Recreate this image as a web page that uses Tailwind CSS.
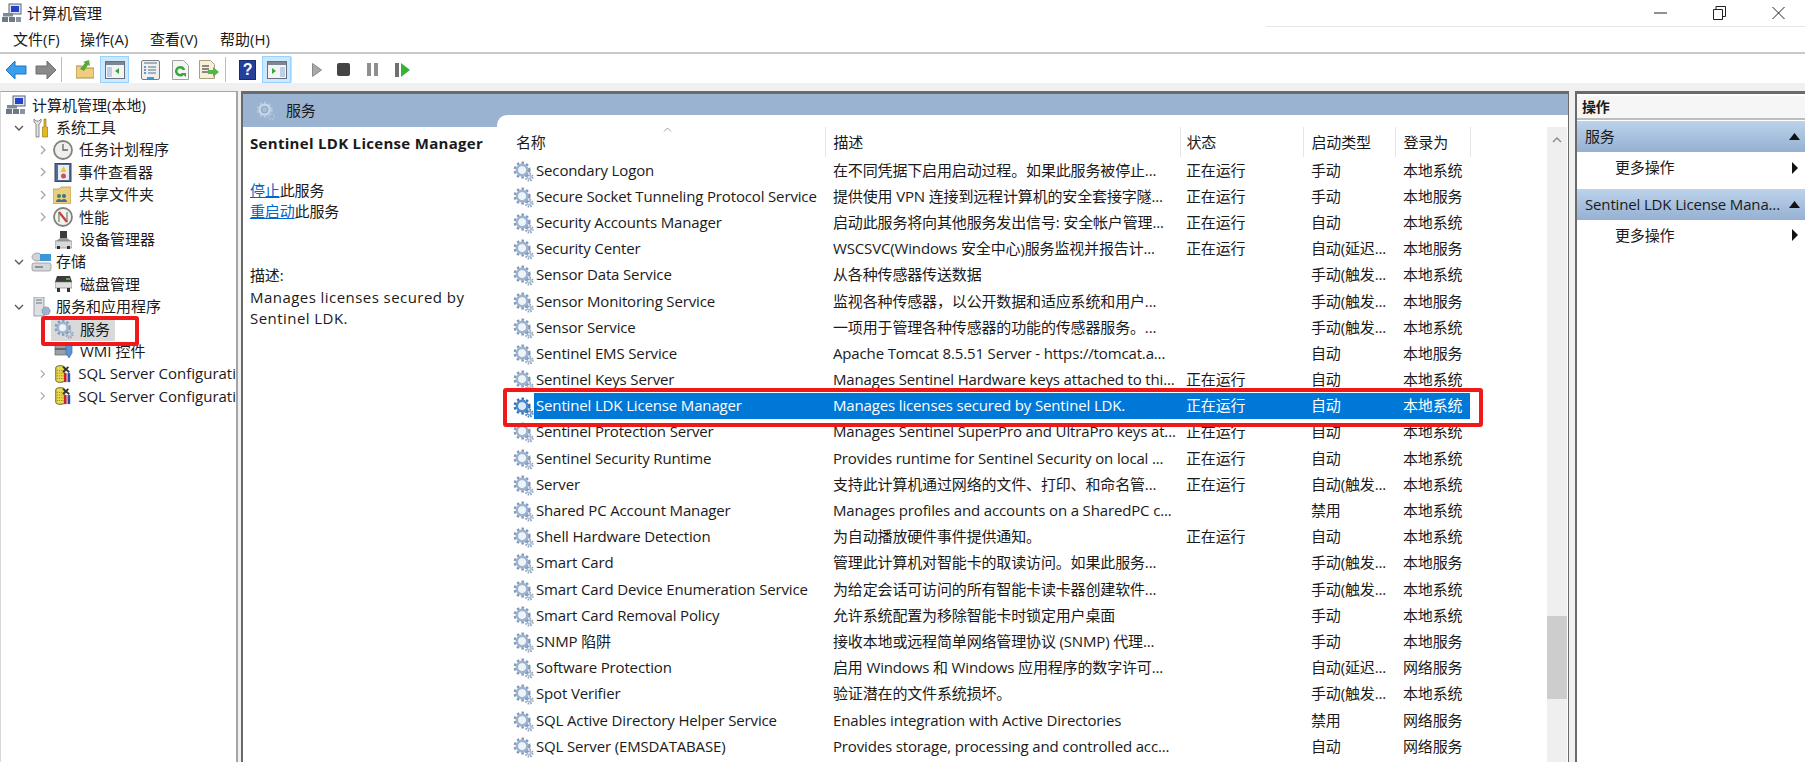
<!DOCTYPE html>
<html lang="zh">
<head>
<meta charset="UTF-8">
<title>计算机管理</title>
<script src="https://cdn.jsdelivr.net/npm/@tailwindcss/browser@4"></script>
</head>
<body class="relative w-[1805px] h-[762px] overflow-hidden bg-white text-[15px] leading-none tracking-[-.15px] text-[#1a1a1a] font-['Open_Sans','Noto_Sans_CJK_SC',sans-serif]">

<!-- shared icons -->
<svg width="0" height="0" class="absolute">
  <defs>
    <symbol id="gear" viewBox="0 0 22 22">
      <circle cx="9.5" cy="9.5" r="7.6" fill="none" stroke="#7f97b8" stroke-width="2.6" stroke-dasharray="2.6 2.4"/>
      <circle cx="9.5" cy="9.5" r="5.4" fill="none" stroke="#9db4d0" stroke-width="2.8"/>
      <circle cx="9.5" cy="9.5" r="3.6" fill="#eef3f8"/>
      <circle cx="17" cy="17" r="3.6" fill="none" stroke="#8ea3bf" stroke-width="2" stroke-dasharray="1.6 1.2"/>
      <circle cx="17" cy="17" r="2" fill="#dfe6ee" stroke="#8ea3bf"/>
    </symbol>
    <symbol id="gear-sel" viewBox="0 0 22 22">
      <circle cx="9.5" cy="9.5" r="7.6" fill="none" stroke="#2f6fb5" stroke-width="2.6" stroke-dasharray="2.6 2.4"/>
      <circle cx="9.5" cy="9.5" r="5.4" fill="none" stroke="#4a8ac9" stroke-width="2.8"/>
      <circle cx="9.5" cy="9.5" r="3.6" fill="#dbe9f6"/>
      <circle cx="17" cy="17" r="3.6" fill="none" stroke="#3d78b8" stroke-width="2" stroke-dasharray="1.6 1.2"/>
      <circle cx="17" cy="17" r="2" fill="#cfe0f0" stroke="#3d78b8"/>
    </symbol>
    <symbol id="gear-pale" viewBox="0 0 22 22">
      <circle cx="9.5" cy="9.5" r="7.6" fill="none" stroke="#b4c6dc" stroke-width="2.6" stroke-dasharray="2.6 2.4"/>
      <circle cx="9.5" cy="9.5" r="5.4" fill="none" stroke="#c9d7e7" stroke-width="2.8"/>
      <circle cx="9.5" cy="9.5" r="3.6" fill="#a8bfd9" stroke="#7f9cc0" stroke-width=".8"/>
      <circle cx="17" cy="17" r="3.2" fill="none" stroke="#b2c3d8" stroke-width="2" stroke-dasharray="1.6 1.2"/>
    </symbol>
    <symbol id="computer" viewBox="0 0 20 20">
      <rect x="7" y="1" width="12" height="10" fill="#dfe4ec" stroke="#56657c"/>
      <rect x="9" y="3" width="8" height="6" fill="#2542c8"/>
      <rect x="1" y="10" width="10" height="3.5" fill="#7d8998"/>
      <rect x="0" y="14" width="6" height="5" fill="#6d7988"/>
      <rect x="7" y="14" width="6" height="5" fill="#6d7988"/>
      <rect x="14" y="14" width="5" height="5" fill="#8a95a3"/>
    </symbol>
    <symbol id="sql" viewBox="0 0 20 20">
      <path d="M2 3c0-3 10-3 10 0v14c0 3-10 3-10 0z" fill="#ecd94c" stroke="#51512a"/>
      <path d="M3.500 6h7M3.500 9h7M3.500 12h7M3.500 15h7" stroke="#7a7a30" stroke-dasharray="1 1"/>
      <path d="M10 2l7 6M16 2l-6 6" stroke="#333" stroke-width="2"/>
      <rect x="11" y="9" width="3" height="10" fill="#c9202c"/>
      <rect x="15" y="9" width="3" height="10" fill="#1f4fb8"/>
    </symbol>
    <symbol id="chev-r" viewBox="0 0 8 10"><path d="M2 1l4 4-4 4" fill="none" stroke="#a6a6a6" stroke-width="1.300"/></symbol>
    <symbol id="chev-d" viewBox="0 0 10 8"><path d="M1 2l4 4 4-4" fill="none" stroke="#555" stroke-width="1.300"/></symbol>
    <symbol id="pane" viewBox="0 0 20 18">
      <rect x=".5" y=".5" width="19" height="17" fill="#f4f4f4" stroke="#66707c"/>
      <rect x="1" y="1" width="18" height="3" fill="#7d8793"/>
    </symbol>
  </defs>
</svg>

<!-- title bar -->
<div class="flex items-center h-[26px]">
  <svg class="w-[20px] h-[20px] ml-[2px]"><use href="#computer"/></svg>
  <span class="ml-[5px] tracking-normal">计算机管理</span>
  <div class="ml-auto flex items-center">
    <svg class="w-[14px] h-[14px] mr-[45px]" viewBox="0 0 14 14"><path d="M0 7h13" stroke="#222" stroke-width="1"/></svg>
    <svg class="w-[13px] h-[14px] mr-[46px]" viewBox="0 0 13 14"><path d="M.5 3.500h9v10h-9zM3 3.500v-3h9.500v10h-3" fill="none" stroke="#222"/></svg>
    <svg class="w-[13px] h-[14px] mr-[20px]" viewBox="0 0 13 14"><path d="M.5 1l12 12M12.500 1l-12 12" stroke="#222"/></svg>
  </div>
</div>

<!-- menu bar -->
<div class="flex h-[28px] border-b-2 border-[#c9c9c9] tracking-normal">
  <div class="flex items-center pl-[13px]">
    <span class="w-[67px]">文件(F)</span><span class="w-[70px]">操作(A)</span><span class="w-[70px]">查看(V)</span><span>帮助(H)</span>
  </div>
  <div class="ml-auto w-[539px] border-t border-[#e6e6e6]"></div>
</div>

<!-- toolbar -->
<div class="flex items-center h-[29px] pt-[2px] pl-[6px]">
  <svg class="w-[21px] h-[18px]" viewBox="0 0 21 18"><path d="M0 9L9 0v5h11v8H9v5z" fill="#3aa0ee" stroke="#1f76c4"/></svg>
  <svg class="w-[21px] h-[18px] ml-[8px]" viewBox="0 0 21 18"><path d="M21 9l-9-9v5H1v8h11v5z" fill="#8a8a8a" stroke="#6e6e6e"/></svg>
  <div class="w-px h-[25px] bg-[#bdbdbd] ml-[5px]"></div>
  <svg class="w-[18px] h-[19px] ml-[14px]" viewBox="0 0 18 19"><path d="M0 6h6l2 2h10v10H0z" fill="#efcd7c" stroke="#a98f4f"/><path d="M4 9l5-6-2-1 6-2 1 6-2-1-4 6z" fill="#5aa83a"/></svg>
  <div class="flex items-center justify-center w-[29px] h-[27px] ml-[6px] bg-[#cce8ff] border border-[#99d1ff]">
    <svg class="w-[20px] h-[18px]"><use href="#pane"/><path d="M2 6h5v10H2z" fill="#bcd0e8"/><path d="M14 7v6l-4-3z" fill="#3aa53a"/></svg>
  </div>
  <svg class="w-[19px] h-[20px] ml-[12px]" viewBox="0 0 19 20"><rect x=".5" y=".5" width="18" height="19" rx="1.500" fill="#efefef" stroke="#7c7c7c"/><path d="M3 3h13M7 7h8M7 10h8M7 13h8" stroke="#8c9bb0" stroke-width="1.500"/><path d="M3 7h2M3 10h2M3 13h2" stroke="#3d75c0" stroke-width="1.500"/><path d="M6 18h7" stroke="#38a0dc" stroke-width="2"/></svg>
  <svg class="w-[17px] h-[20px] ml-[12px]" viewBox="0 0 17 20"><path d="M.5.500h11l5 5v14H.5z" fill="#f5f5f5" stroke="#a0a0a0"/><path d="M12 10a4 4 0 1 0-1 4" fill="none" stroke="#3aa53a" stroke-width="2.500"/><path d="M9 13h5v4z" fill="#3aa53a"/></svg>
  <svg class="w-[20px] h-[20px] ml-[10px]" viewBox="0 0 20 20"><path d="M.5.500h11l4 4v14H.5z" fill="#f6f0d8" stroke="#a79f80"/><path d="M3 6h7M3 9h7M3 12h7" stroke="#666" stroke-width="1.500"/><path d="M9 10h5V7l6 5-6 5v-3H9z" fill="#52b64c"/></svg>
  <div class="w-px h-[25px] bg-[#bdbdbd] ml-[6px]"></div>
  <div class="flex items-center justify-center w-[17px] h-[20px] ml-[13px] bg-[#24409c] border border-[#1a2a6a] text-white font-bold text-[16px] font-['Liberation_Sans',sans-serif]">?</div>
  <div class="flex items-center justify-center w-[29px] h-[27px] ml-[6px] bg-[#cce8ff] border border-[#99d1ff]">
    <svg class="w-[20px] h-[18px]"><use href="#pane"/><path d="M13 6h5v10h-5z" fill="#bcd0e8"/><path d="M5 7v6l4-3z" fill="#3aa53a"/></svg>
  </div>
  <div class="w-px h-[25px] bg-[#dcdcdc]"></div>
  <svg class="w-[10px] h-[14px] ml-[20px]" viewBox="0 0 10 14"><path d="M.5.500l9 6.500-9 6.500z" fill="#a9a9a9" stroke="#8a8a8a"/></svg>
  <div class="w-[13px] h-[13px] ml-[15px] rounded-[2px] bg-[#444]"></div>
  <svg class="w-[11px] h-[13px] ml-[17px]" viewBox="0 0 11 13"><path d="M0 0h4v13H0zM7 0h4v13H7z" fill="#8f8f8f"/></svg>
  <svg class="w-[15px] h-[14px] ml-[17px]" viewBox="0 0 15 14"><path d="M0 0h4v14H0z" fill="#707070"/><path d="M6 0l9 7-9 7z" fill="#38b03a"/></svg>
</div>

<!-- main area -->
<div class="flex h-[679px] bg-[#f0f0f0] pt-[8px]">

  <!-- tree -->
  <div class="w-[238px] pl-[6px] pt-[2px] bg-white border-t border-l border-r-2 border-[#a5a5a5] border-l-[#d8d8d8] overflow-hidden whitespace-nowrap tracking-normal [&>div]:h-[22.4px] [&>div]:flex [&>div]:items-center">
    <div><svg class="w-[20px] h-[20px] -ml-px"><use href="#computer"/></svg><span class="ml-[6px]">计算机管理(本地)</span></div>
    <div class="ml-[7px]">
      <svg class="w-[10px] h-[8px]"><use href="#chev-d"/></svg>
      <svg class="w-[16px] h-[20px] ml-[9px]" viewBox="0 0 16 20"><path d="M1 1v3l2 2v13h3V6l2-2V1L6 3H3z" fill="#e2e2e2" stroke="#666" stroke-width=".7"/><path d="M11 1h2v8h1.500v10h-5V9H11z" fill="#e8b820" stroke="#8a6a10" stroke-width=".6"/></svg>
      <span class="ml-[7px]">系统工具</span>
    </div>
    <div class="ml-[32px]">
      <svg class="w-[8px] h-[10px]"><use href="#chev-r"/></svg>
      <svg class="w-[20px] h-[20px] ml-[6px]" viewBox="0 0 20 20"><circle cx="10" cy="10" r="9" fill="#efefef" stroke="#85827a" stroke-width="1.800"/><path d="M10 4v6h5" fill="none" stroke="#666" stroke-width="1.300"/></svg>
      <span class="ml-[6px]">任务计划程序</span>
    </div>
    <div class="ml-[32px]">
      <svg class="w-[8px] h-[10px]"><use href="#chev-r"/></svg>
      <svg class="w-[18px] h-[19px] ml-[7px]" viewBox="0 0 18 19"><rect x="1" y=".5" width="16" height="18" fill="#516c96" stroke="#35486a"/><rect x="4" y="2" width="11" height="15" fill="#e8edf4"/><path d="M9.500 3l3 6h-6z" fill="#efc52c"/><circle cx="9.500" cy="13" r="2.500" fill="#d05050"/></svg>
      <span class="ml-[6px]">事件查看器</span>
    </div>
    <div class="ml-[32px]">
      <svg class="w-[8px] h-[10px]"><use href="#chev-r"/></svg>
      <svg class="w-[18px] h-[18px] ml-[6px]" viewBox="0 0 18 18"><path d="M0 3h6l2-2h10v17H0z" fill="#eccf7e" stroke="#a98f4f" stroke-width=".7"/><circle cx="6" cy="10" r="2" fill="#3c8a5c"/><circle cx="11" cy="10" r="2" fill="#3a6aa8"/><path d="M3 16c0-4 6-4 6 0zM8 16c0-4 6-4 6 0z" fill="#476e8e"/></svg>
      <span class="ml-[8px]">共享文件夹</span>
    </div>
    <div class="ml-[32px]">
      <svg class="w-[8px] h-[10px]"><use href="#chev-r"/></svg>
      <svg class="w-[20px] h-[20px] ml-[6px]" viewBox="0 0 20 20"><circle cx="10" cy="10" r="9" fill="#f2f2f2" stroke="#85827a" stroke-width="1.800"/><path d="M6 5l8 10" stroke="#d33" stroke-width="2.200"/><path d="M6 5v10M14 5v10" stroke="#5e8a5e" stroke-width="1.200"/></svg>
      <span class="ml-[6px]">性能</span>
    </div>
    <div class="ml-[48px]">
      <svg class="w-[17px] h-[18px]" viewBox="0 0 17 18"><rect x="5" y="0" width="7" height="7" fill="#3d3d3d"/><path d="M5 7L1 10h15l-4-3z" fill="#9a9a9a"/><rect x="0" y="10" width="17" height="7" fill="#d8d8d8" stroke="#7a7a7a" stroke-width=".6"/><rect x="2" y="15" width="3" height="3" fill="#333"/><rect x="12" y="15" width="3" height="3" fill="#333"/></svg>
      <span class="ml-[8px]">设备管理器</span>
    </div>
    <div class="ml-[7px]">
      <svg class="w-[10px] h-[8px]"><use href="#chev-d"/></svg>
      <svg class="w-[21px] h-[20px] ml-[7px]" viewBox="0 0 21 20"><ellipse cx="6" cy="5" rx="5" ry="4" fill="#cfd3d6" stroke="#8a8a8a" stroke-width=".7"/><rect x="9" y="2" width="11" height="7" fill="#3b97d6"/><rect x="1" y="11" width="19" height="8" rx="2" fill="#d5d8da" stroke="#8a8a8a" stroke-width=".7"/><path d="M4 15h8" stroke="#777" stroke-width="1.500"/></svg>
      <span class="ml-[4px]">存储</span>
    </div>
    <div class="ml-[48px]">
      <svg class="w-[17px] h-[16px]" viewBox="0 0 17 16"><path d="M2 0h13l2 6H0z" fill="#3c3c3c"/><rect x="0" y="6" width="17" height="6" fill="#e0e0e0" stroke="#777" stroke-width=".6"/><rect x="2" y="12" width="3" height="4" fill="#333"/><rect x="12" y="12" width="3" height="4" fill="#333"/><path d="M11 3h4" stroke="#5ad05a" stroke-width="1.500"/></svg>
      <span class="ml-[8px]">磁盘管理</span>
    </div>
    <div class="ml-[7px]">
      <svg class="w-[10px] h-[8px]"><use href="#chev-d"/></svg>
      <svg class="w-[18px] h-[20px] ml-[9px]" viewBox="0 0 18 20"><rect x="1" y="0" width="10" height="19" fill="#dce0e4" stroke="#8a8f96" stroke-width=".8"/><path d="M3 3h6M3 6h6" stroke="#6e7680"/><circle cx="13" cy="14" r="4" fill="#9db4d0" stroke="#6f87a8" stroke-dasharray="1.500 1"/></svg>
      <span class="ml-[5px]">服务和应用程序</span>
    </div>
    <div class="ml-[44px] relative">
      <div class="flex items-center w-[64px] h-[23px] bg-[#d9d9d9]">
        <svg class="w-[20px] h-[20px] ml-[3px] shrink-0"><use href="#gear"/></svg>
        <span class="ml-[6px]">服务</span>
      </div>
    </div>
    <div class="ml-[47px]">
      <svg class="w-[20px] h-[18px]" viewBox="0 0 20 18"><path d="M1 3h12v10H1z" fill="#9aa0a6" stroke="#5e646a" stroke-width=".7"/><path d="M1 7h12" stroke="#333"/><path d="M12 1h6v10l-3 5-3-5z" fill="#5a94d6" stroke="#3a6aa8" stroke-width=".7"/></svg>
      <span class="ml-[6px]">WMI 控件</span>
    </div>
    <div class="ml-[32px]">
      <svg class="w-[8px] h-[10px]"><use href="#chev-r"/></svg>
      <svg class="w-[20px] h-[20px] ml-[8px]"><use href="#sql"/></svg>
      <span class="ml-[6px]">SQL Server Configurati</span>
    </div>
    <div class="ml-[32px]">
      <svg class="w-[8px] h-[10px]"><use href="#chev-r"/></svg>
      <svg class="w-[20px] h-[20px] ml-[8px]"><use href="#sql"/></svg>
      <span class="ml-[6px]">SQL Server Configurati</span>
    </div>
  </div>

  <!-- centre pane -->
  <div class="flex w-[1328px] ml-[3px] border-t-[3px] border-l-2 border-r border-[#6a6a6a] bg-white">
    <div class="w-[254px] shrink-0">
      <div class="flex items-center h-[33px] bg-[#9ab3d0]">
        <svg class="w-[20px] h-[20px] ml-[13px]"><use href="#gear-pale"/></svg>
        <span class="ml-[10px]">服务</span>
      </div>
      <div class="pl-[7px] pr-[10px]">
        <div class="mt-[9px] h-[17px] font-bold tracking-[.3px]">Sentinel LDK License Manager</div>
        <div class="mt-[30px] h-[21px]"><a class="text-[#0066cc] underline">停止</a>此服务</div>
        <div class="h-[21px]"><a class="text-[#0066cc] underline">重启动</a>此服务</div>
        <div class="mt-[43px] h-[19px]">描述:</div>
        <div class="leading-[21px] tracking-[.45px]">Manages licenses secured by Sentinel LDK.</div>
      </div>
    </div>
    <div class="flex-1 bg-[#9ab3d0] min-w-0">
      <div class="flex h-[647px] mt-[21px] pt-[12px] pl-[13px] bg-white rounded-tl-[10px]">
        <div class="relative w-[1037px] overflow-hidden">
          <svg class="absolute left-[153px] top-[0px] w-[9px] h-[5px]" viewBox="0 0 9 5"><path d="M1 4.500l3.500-3.500 3.500 3.500" fill="none" stroke="#a0a0a0"/></svg>
          <table class="table-fixed w-[1037px] border-collapse [&_td]:whitespace-nowrap [&_td]:overflow-hidden [&_td]:p-0 [&_td]:pl-[8px] [&_td:nth-child(3)]:pl-[6px] [&_th]:p-0 [&_th]:pl-[8px] [&_th:nth-child(3)]:pl-[6px] [&_th:first-child]:pl-[6px] [&_th]:font-normal [&_th]:text-left [&_th]:border-r [&_th]:border-[#e5e5e5] [&_tbody_tr]:h-[26.2px] [&_td:first-child]:pl-[3px] [&_td:first-child]:pt-[2px] [&_svg]:inline-block [&_svg]:align-middle">
            <colgroup>
              <col class="w-[315px]"><col class="w-[355px]"><col class="w-[123px]"><col class="w-[92px]"><col class="w-[75px]"><col>
            </colgroup>
            <thead>
              <tr class="h-[30px]">
                <th>名称</th><th>描述</th><th>状态</th><th>启动类型</th><th>登录为</th><th class="border-r-0!"></th>
              </tr>
            </thead>
            <tbody>
              <tr><td><svg class="w-[21px] h-[21px] mr-[2px]"><use href="#gear"/></svg>Secondary Logon</td><td>在不同凭据下启用启动过程。如果此服务被停止...</td><td>正在运行</td><td>手动</td><td>本地系统</td><td></td></tr>
              <tr><td><svg class="w-[21px] h-[21px] mr-[2px]"><use href="#gear"/></svg>Secure Socket Tunneling Protocol Service</td><td>提供使用 VPN 连接到远程计算机的安全套接字隧...</td><td>正在运行</td><td>手动</td><td>本地服务</td><td></td></tr>
              <tr><td><svg class="w-[21px] h-[21px] mr-[2px]"><use href="#gear"/></svg>Security Accounts Manager</td><td>启动此服务将向其他服务发出信号: 安全帐户管理...</td><td>正在运行</td><td>自动</td><td>本地系统</td><td></td></tr>
              <tr><td><svg class="w-[21px] h-[21px] mr-[2px]"><use href="#gear"/></svg>Security Center</td><td>WSCSVC(Windows 安全中心)服务监视并报告计...</td><td>正在运行</td><td>自动(延迟...</td><td>本地服务</td><td></td></tr>
              <tr><td><svg class="w-[21px] h-[21px] mr-[2px]"><use href="#gear"/></svg>Sensor Data Service</td><td>从各种传感器传送数据</td><td></td><td>手动(触发...</td><td>本地系统</td><td></td></tr>
              <tr><td><svg class="w-[21px] h-[21px] mr-[2px]"><use href="#gear"/></svg>Sensor Monitoring Service</td><td>监视各种传感器，以公开数据和适应系统和用户...</td><td></td><td>手动(触发...</td><td>本地服务</td><td></td></tr>
              <tr><td><svg class="w-[21px] h-[21px] mr-[2px]"><use href="#gear"/></svg>Sensor Service</td><td>一项用于管理各种传感器的功能的传感器服务。...</td><td></td><td>手动(触发...</td><td>本地系统</td><td></td></tr>
              <tr><td><svg class="w-[21px] h-[21px] mr-[2px]"><use href="#gear"/></svg>Sentinel EMS Service</td><td>Apache Tomcat 8.5.51 Server - https://tomcat.a...</td><td></td><td>自动</td><td>本地服务</td><td></td></tr>
              <tr><td><svg class="w-[21px] h-[21px] mr-[2px]"><use href="#gear"/></svg>Sentinel Keys Server</td><td>Manages Sentinel Hardware keys attached to thi...</td><td>正在运行</td><td>自动</td><td>本地系统</td><td></td></tr>
              <tr class="text-white [&_td]:bg-[#0078d7] [&_td:first-child]:bg-white [&_td:last-child]:bg-white [&_td:first-child]:text-[#1a1a1a] [&_td:first-child]:pt-0!"><td><svg class="w-[21px] h-[21px]"><use href="#gear-sel"/></svg><span class="inline-flex items-center h-[26px] pl-[2px] bg-[#0078d7] text-white w-[293px]">Sentinel LDK License Manager</span></td><td>Manages licenses secured by Sentinel LDK.</td><td>正在运行</td><td>自动</td><td>本地系统</td><td></td></tr>
              <tr><td><svg class="w-[21px] h-[21px] mr-[2px]"><use href="#gear"/></svg>Sentinel Protection Server</td><td>Manages Sentinel SuperPro and UltraPro keys at...</td><td>正在运行</td><td>自动</td><td>本地系统</td><td></td></tr>
              <tr><td><svg class="w-[21px] h-[21px] mr-[2px]"><use href="#gear"/></svg>Sentinel Security Runtime</td><td>Provides runtime for Sentinel Security on local ...</td><td>正在运行</td><td>自动</td><td>本地系统</td><td></td></tr>
              <tr><td><svg class="w-[21px] h-[21px] mr-[2px]"><use href="#gear"/></svg>Server</td><td>支持此计算机通过网络的文件、打印、和命名管...</td><td>正在运行</td><td>自动(触发...</td><td>本地系统</td><td></td></tr>
              <tr><td><svg class="w-[21px] h-[21px] mr-[2px]"><use href="#gear"/></svg>Shared PC Account Manager</td><td>Manages profiles and accounts on a SharedPC c...</td><td></td><td>禁用</td><td>本地系统</td><td></td></tr>
              <tr><td><svg class="w-[21px] h-[21px] mr-[2px]"><use href="#gear"/></svg>Shell Hardware Detection</td><td>为自动播放硬件事件提供通知。</td><td>正在运行</td><td>自动</td><td>本地系统</td><td></td></tr>
              <tr><td><svg class="w-[21px] h-[21px] mr-[2px]"><use href="#gear"/></svg>Smart Card</td><td>管理此计算机对智能卡的取读访问。如果此服务...</td><td></td><td>手动(触发...</td><td>本地服务</td><td></td></tr>
              <tr><td><svg class="w-[21px] h-[21px] mr-[2px]"><use href="#gear"/></svg>Smart Card Device Enumeration Service</td><td>为给定会话可访问的所有智能卡读卡器创建软件...</td><td></td><td>手动(触发...</td><td>本地系统</td><td></td></tr>
              <tr><td><svg class="w-[21px] h-[21px] mr-[2px]"><use href="#gear"/></svg>Smart Card Removal Policy</td><td>允许系统配置为移除智能卡时锁定用户桌面</td><td></td><td>手动</td><td>本地系统</td><td></td></tr>
              <tr><td><svg class="w-[21px] h-[21px] mr-[2px]"><use href="#gear"/></svg>SNMP 陷阱</td><td>接收本地或远程简单网络管理协议 (SNMP) 代理...</td><td></td><td>手动</td><td>本地服务</td><td></td></tr>
              <tr><td><svg class="w-[21px] h-[21px] mr-[2px]"><use href="#gear"/></svg>Software Protection</td><td>启用 Windows 和 Windows 应用程序的数字许可...</td><td></td><td>自动(延迟...</td><td>网络服务</td><td></td></tr>
              <tr><td><svg class="w-[21px] h-[21px] mr-[2px]"><use href="#gear"/></svg>Spot Verifier</td><td>验证潜在的文件系统损坏。</td><td></td><td>手动(触发...</td><td>本地系统</td><td></td></tr>
              <tr><td><svg class="w-[21px] h-[21px] mr-[2px]"><use href="#gear"/></svg>SQL Active Directory Helper Service</td><td>Enables integration with Active Directories</td><td></td><td>禁用</td><td>网络服务</td><td></td></tr>
              <tr><td><svg class="w-[21px] h-[21px] mr-[2px]"><use href="#gear"/></svg>SQL Server (EMSDATABASE)</td><td>Provides storage, processing and controlled acc...</td><td></td><td>自动</td><td>网络服务</td><td></td></tr>
            </tbody>
          </table>
        </div>
        <!-- scrollbar -->
        <div class="relative w-[20px] bg-[#efefef]">
          <svg class="absolute left-[5px] top-[10px] w-[10px] h-[6px]" viewBox="0 0 10 6"><path d="M1 5l4-4 4 4" fill="none" stroke="#8a8a8a" stroke-width="1.400"/></svg>
          <div class="absolute left-0 top-[489px] w-[20px] h-[83px] bg-[#cdcdcd]"></div>
        </div>
        <div class="w-px"></div>
      </div>
    </div>
  </div>

  <!-- actions pane -->
  <div class="w-[230px] ml-[6px] border-t-[3px] border-l-2 border-[#6a6a6a] bg-white">
    <div class="flex items-center h-[24px] pl-[5px] mt-[2px] bg-[#f6f6f6] border-b-2 border-[#bdbdbd] font-bold text-[14px]">操作</div>
    <div class="flex items-center justify-between h-[31px] mt-[1px] pl-[8px] pr-[5px] bg-gradient-to-b from-[#bdd3ec] to-[#95b0d1]">
      <span>服务</span>
      <svg class="w-[11px] h-[7px]" viewBox="0 0 11 7"><path d="M5.500 0L11 7H0z" fill="#111"/></svg>
    </div>
    <div class="flex items-center justify-between h-[37px] pb-[6px] pl-[38px] pr-[7px]">
      <span>更多操作</span>
      <svg class="w-[6px] h-[12px]" viewBox="0 0 6 12"><path d="M0 0l6 6-6 6z" fill="#111"/></svg>
    </div>
    <div class="flex items-center justify-between h-[31px] pl-[8px] pr-[5px] bg-gradient-to-b from-[#bdd3ec] to-[#95b0d1]">
      <span>Sentinel LDK License Mana...</span>
      <svg class="w-[11px] h-[7px]" viewBox="0 0 11 7"><path d="M5.500 0L11 7H0z" fill="#111"/></svg>
    </div>
    <div class="flex items-center justify-between h-[30px] pl-[38px] pr-[7px]">
      <span>更多操作</span>
      <svg class="w-[6px] h-[12px]" viewBox="0 0 6 12"><path d="M0 0l6 6-6 6z" fill="#111"/></svg>
    </div>
  </div>
</div>

<!-- red annotation boxes drawn over the screenshot -->
<div class="absolute left-[41px] top-[316px] w-[98px] h-[30px] border-4 border-[#f01818] rounded-[3px]"></div>
<div class="absolute left-[503px] top-[388px] w-[980px] h-[39px] border-4 border-[#f01818] rounded-[3px]"></div>

</body>
</html>
